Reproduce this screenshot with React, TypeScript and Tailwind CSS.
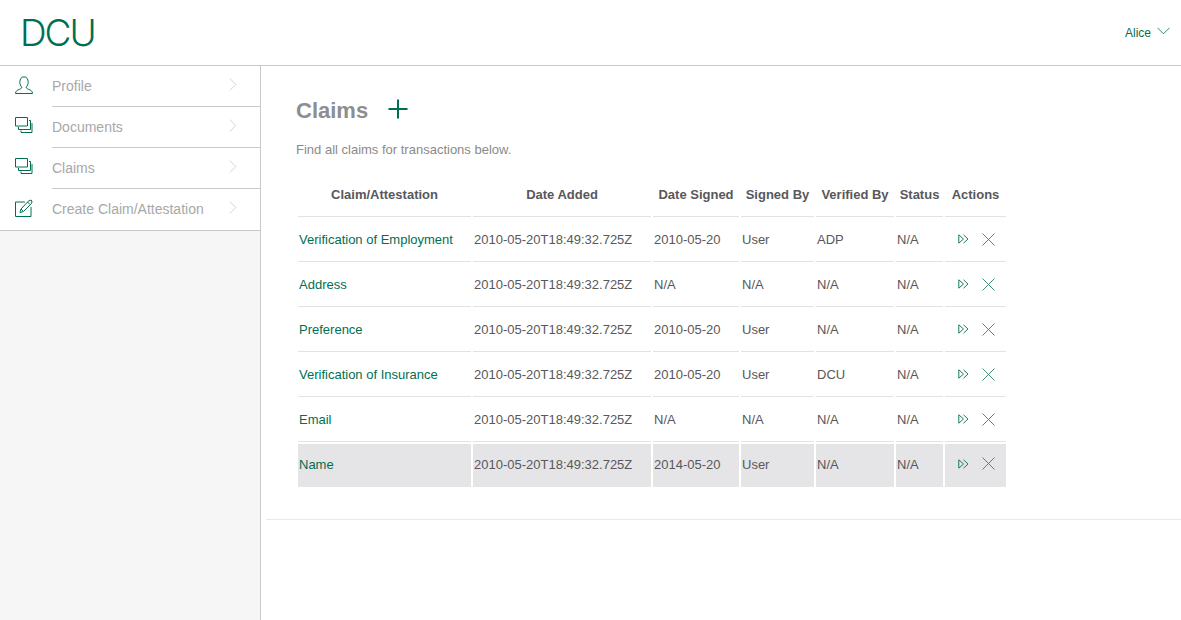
import { Plus } from 'lucide-react'

const GREEN = '#006f51'

const rows = [
  { name: 'Verification of Employment', signed: '2010-05-20', by: 'User', verified: 'ADP' },
  { name: 'Address', signed: 'N/A', by: 'N/A', verified: 'N/A' },
  { name: 'Preference', signed: '2010-05-20', by: 'User', verified: 'N/A' },
  { name: 'Verification of Insurance', signed: '2010-05-20', by: 'User', verified: 'DCU' },
  { name: 'Email', signed: 'N/A', by: 'N/A', verified: 'N/A' },
  { name: 'Name', signed: '2014-05-20', by: 'User', verified: 'N/A' },
]

function UserIcon() {
  return (
    <svg width="18" height="18" viewBox="0 0 18 18" fill="none" stroke={GREEN} strokeWidth="1">
      <path d="M.5 17.5h17c0-2.500-2-3.500-4-4.200-1.600-.6-2.300-1.200-2.300-2.300 1.200-1 2-2.700 2-4.600C13.200 3 11.600.8 9 .8S4.800 3 4.800 6.400c0 1.900.8 3.600 2 4.600 0 1.100-.7 1.700-2.300 2.300-2 .7-4 1.700-4 4.200z" />
    </svg>
  )
}

function DocsIcon() {
  return (
    <svg width="18" height="16" viewBox="0 0 18 16" fill="none" stroke={GREEN} strokeWidth="1">
      <path d="M.5.5h12v8.500H.5z" />
      <path d="M14 3.500h1.500v9H3.500V10" />
      <path d="M17 6v9.500H6v-2" />
    </svg>
  )
}

function EditIcon() {
  return (
    <svg width="18" height="18" viewBox="0 0 18 18" fill="none" stroke={GREEN} strokeWidth="1">
      <path d="M10 3H.5v14.500H16V8" />
      <path d="M5 13.500l1-3.500 7.500-8 2.500-1 1 1-.5 2.500-8 8z" />
      <path d="M12.500 3l2.500 2.500M6 10l2 2" />
    </svg>
  )
}

function PlayIcon() {
  return (
    <svg width="11" height="10" viewBox="0 0 11 10" fill="none" stroke="#1a7d60" strokeWidth="1">
      <path d="M.8.800v8.400L5.500 5z" />
      <path d="M5.500.800L10 5 5.500 9.200" />
    </svg>
  )
}

function CloseIcon() {
  return (
    <svg width="13" height="13" viewBox="0 0 13 13" fill="none" stroke="#2a8469" strokeWidth="0.9">
      <path d="M.5.500l12 12M12.500.500l-12 12" />
    </svg>
  )
}

function NavChevron() {
  return (
    <svg width="8" height="13" viewBox="0 0 8 13" fill="none" stroke="#c9c9c9" strokeWidth="0.8">
      <path d="M.8.500l6 6-6 6" />
    </svg>
  )
}

const nav = [
  { label: 'Profile', icon: <UserIcon /> },
  { label: 'Documents', icon: <DocsIcon /> },
  { label: 'Claims', icon: <DocsIcon /> },
  { label: 'Create Claim/Attestation', icon: <EditIcon /> },
]

export default function App() {
  return (
    <div className="h-[620px] overflow-hidden bg-white font-['Liberation_Sans',sans-serif] antialiased">
      <header className="h-[66px] flex items-center justify-between border-b border-[#c8c8c8] pl-[20px] pr-[11px]">
        <span className="text-[37px] font-['Inter',sans-serif] font-light tracking-[-2px] text-[#006f51]">DCU</span>
        <span className="flex items-center gap-[6px] text-[12px] text-[#006f51] pl-[1px]">
          Alice
          <svg width="13" height="8" viewBox="0 0 13 8" fill="none" stroke={GREEN} strokeWidth="0.8" className="-mt-[3px]">
            <path d="M.5.800l6 6 6-6" />
          </svg>
        </span>
      </header>

      <div className="flex h-[554px]">
        <aside className="w-[261px] shrink-0 border-r border-[#c8c8c8] bg-[#f6f6f6]">
          <nav className="bg-white border-b border-[#c8c8c8]">
            {nav.map((item, i) => (
              <div key={item.label} className="flex h-[41px]">
                <div className="w-[52px] pl-[15px] pt-[10px] shrink-0">{item.icon}</div>
                <div className={`flex-1 flex items-center justify-between pr-[23px] ${i < 3 ? 'border-b border-[#c8c8c8]' : ''}`}>
                  <span className="text-[14px] text-[#a8a8a8]">{item.label}</span>
                  <span className="-mt-[4px]"><NavChevron /></span>
                </div>
              </div>
            ))}
          </nav>
        </aside>

        <main className="flex-1 pl-[5px]">
          <div className="h-[454px] border-b border-[#e9e9e9] pl-[30px] pt-[29px]">
            <div className="flex items-center gap-[20px] h-[30px]">
              <h1 className="text-[22px] font-bold text-[#8e8e90]">Claims</h1>
              <Plus className="w-[30px] h-[30px] -mx-[5px] text-[#006f51] -mt-[2px]" strokeWidth={1.6} />
            </div>
            <p className="text-[13px] text-[#8a8a8a] mt-[17px] leading-[16px]">Find all claims for transactions below.</p>

            <table className="mt-[14px] border-separate border-spacing-[2px] text-[13px] text-[#58585a] table-fixed w-[712px]">
              <thead>
                <tr className="h-[43px] font-bold">
                  <th className="w-[173px] border-b border-[#e2e2e2] font-bold">Claim/Attestation</th>
                  <th className="w-[178px] border-b border-[#e2e2e2] font-bold">Date Added</th>
                  <th className="w-[86px] border-b border-[#e2e2e2] font-bold">Date Signed</th>
                  <th className="w-[73px] border-b border-[#e2e2e2] font-bold">Signed By</th>
                  <th className="w-[78px] border-b border-[#e2e2e2] font-bold">Verified By</th>
                  <th className="w-[47px] border-b border-[#e2e2e2] font-bold">Status</th>
                  <th className="w-[61px] border-b border-[#e2e2e2] font-bold">Actions</th>
                </tr>
              </thead>
              <tbody>
                {rows.map((row, i) => {
                  const last = i === rows.length - 1
                  const cell = last ? 'h-[43px] pl-[1px] pb-[2px] bg-[#e5e5e7]' : 'h-[43px] pl-[1px] border-b border-[#e2e2e2]'
                  return (
                    <tr key={row.name}>
                      <td className={`${cell} text-[#006f51]`}>{row.name}</td>
                      <td className={cell}>2010-05-20T18:49:32.725Z</td>
                      <td className={cell}>{row.signed}</td>
                      <td className={cell}>{row.by}</td>
                      <td className={cell}>{row.verified}</td>
                      <td className={cell}>N/A</td>
                      <td className={cell}>
                        <div className="flex items-center pl-[12px] gap-[13px] -mt-[2px]">
                          <PlayIcon />
                          <CloseIcon />
                        </div>
                      </td>
                    </tr>
                  )
                })}
              </tbody>
            </table>
          </div>
        </main>
      </div>
    </div>
  )
}
